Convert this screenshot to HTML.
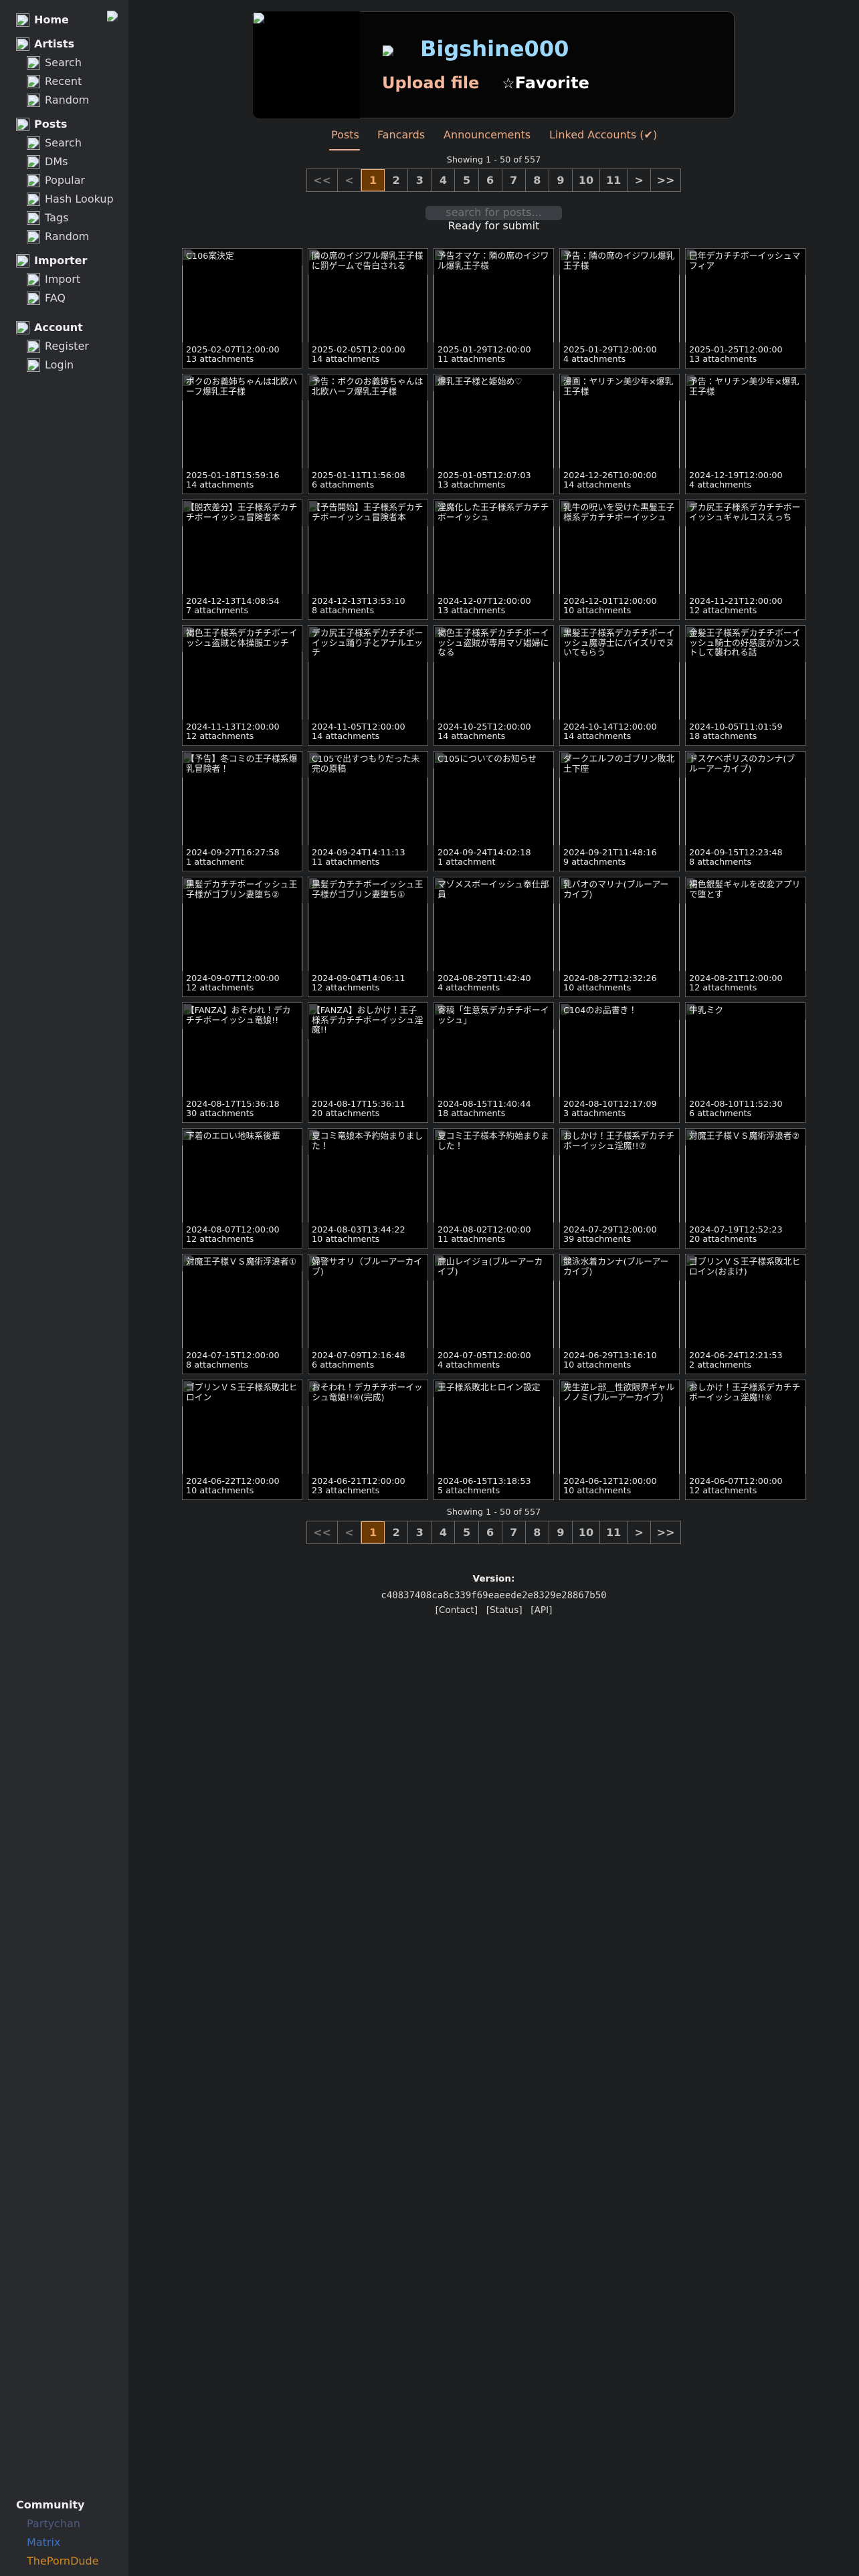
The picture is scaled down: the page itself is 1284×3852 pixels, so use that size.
<!DOCTYPE html>
<html lang="ja">
<head>
<meta charset="utf-8">
<title>Bigshine000</title>
<style>
html,body{margin:0;padding:0;background:#1d1f21;}
body{position:relative;width:1284px;height:3852px;overflow:hidden;font-family:"DejaVu Sans","Noto Sans CJK JP",sans-serif;color:#eee;}
.abs{position:absolute;white-space:nowrap;}
#side{position:absolute;left:0;top:0;width:192px;height:3852px;background:#282a2e;}
.nav{position:absolute;white-space:nowrap;font-size:16px;line-height:20px;color:#d8d8d8;margin-top:1px;}
.nav.h{font-weight:bold;color:#eee;}
.bx{position:absolute;width:18px;height:18px;border:1px solid #a8a8a8;}
.bx svg{position:absolute;left:1px;top:1px;width:16px;height:16px;}
svg.i{position:absolute;width:16px;height:16px;}
#banner{position:absolute;left:378px;top:17px;width:720px;height:160px;box-sizing:border-box;background:#050505;border:1px solid #3c3c3c;border-left:0;border-radius:10px;}
#avatar{position:absolute;left:378px;top:17px;width:160px;height:160px;background:#000;border-radius:10px 0 0 10px;}
.tab{position:absolute;top:192px;font-size:16px;line-height:20px;color:#e8a987;white-space:nowrap;}
.ctr{position:absolute;left:192px;width:1092px;text-align:center;white-space:nowrap;}
.pg{position:absolute;left:458px;height:35px;display:flex;box-sizing:border-box;border:1px solid #6a6a6a;width:560px;font-weight:bold;font-size:16px;line-height:33px;color:#bdbdbd;}
.pg span{display:block;box-sizing:border-box;width:35.1px;text-align:center;border-right:1px solid #6a6a6a;}
.pg span:last-child{border-right:0;flex:1;}
.pg .w{width:46px;}
.pg .m{width:41.1px;}
.pg .d{color:#757575;}
.pg .a{background:#6b3a05;color:#f0a763;outline:1px solid #f0b27a;outline-offset:-1px;border-right:0;}
#grid{position:absolute;left:272px;top:371px;display:grid;grid-template-columns:repeat(5,180px);grid-auto-rows:180px;gap:8px;}
.c{position:relative;box-sizing:border-box;background:#000;border:1px solid #b0b0b0;border-top-color:#5a5a5a;border-bottom-color:#5a5a5a;font-size:12.8px;line-height:14.08px;color:#e8e8e8;}
.c svg{position:absolute;left:1px;top:1px;width:16px;height:16px;opacity:.3;}
.t{position:relative;margin:0 -1px;padding:5px;line-height:14.72px;border:solid #5a5a5a;border-width:0 1px;background:transparent;overflow-wrap:anywhere;word-break:break-all;}
.f{position:absolute;left:-1px;right:-1px;bottom:0;height:38px;box-sizing:border-box;padding:5px;border:solid #5a5a5a;border-width:0 1px;}
</style>
</head>
<body>
<svg width="0" height="0" style="position:absolute">
<defs>
<symbol id="b" viewBox="0 0 16 16">
<path d="M0.5 0.5H11L15.5 5V9L8.5 15.5H0.5Z" fill="#dfe9f7" stroke="#b4b8bc" stroke-width="1"/>
<path d="M11 0.5V5H15.5Z" fill="#fff" stroke="#b4b8bc" stroke-width=".8"/>
<path d="M3 6C3 4.6 5 4.4 5.6 5.2C6.6 4.6 8 5 8 6Z" fill="#fff"/>
<path d="M1 15V11.5C3.5 8.5 7 8 10 10.8L5 15Z" fill="#57a84a"/>
<path d="M9 16L16 9.5V16H14L15 13L11 16Z" fill="#39424a"/>
</symbol>
</defs>
</svg>

<div id="side">
<svg class="i" style="left:160px;top:16px"><use href="#b"/></svg>
<div class="bx" style="left:24px;top:20px"><svg><use href="#b"/></svg></div><div class="nav h" style="left:51px;top:19px">Home</div>
<div class="bx" style="left:24px;top:56px"><svg><use href="#b"/></svg></div><div class="nav h" style="left:51px;top:55px">Artists</div>
<div class="bx" style="left:40px;top:84px"><svg><use href="#b"/></svg></div><div class="nav" style="left:67px;top:83px">Search</div>
<div class="bx" style="left:40px;top:112px"><svg><use href="#b"/></svg></div><div class="nav" style="left:67px;top:111px">Recent</div>
<div class="bx" style="left:40px;top:140px"><svg><use href="#b"/></svg></div><div class="nav" style="left:67px;top:139px">Random</div>
<div class="bx" style="left:24px;top:176px"><svg><use href="#b"/></svg></div><div class="nav h" style="left:51px;top:175px">Posts</div>
<div class="bx" style="left:40px;top:204px"><svg><use href="#b"/></svg></div><div class="nav" style="left:67px;top:203px">Search</div>
<div class="bx" style="left:40px;top:232px"><svg><use href="#b"/></svg></div><div class="nav" style="left:67px;top:231px">DMs</div>
<div class="bx" style="left:40px;top:260px"><svg><use href="#b"/></svg></div><div class="nav" style="left:67px;top:259px">Popular</div>
<div class="bx" style="left:40px;top:288px"><svg><use href="#b"/></svg></div><div class="nav" style="left:67px;top:287px">Hash Lookup</div>
<div class="bx" style="left:40px;top:316px"><svg><use href="#b"/></svg></div><div class="nav" style="left:67px;top:315px">Tags</div>
<div class="bx" style="left:40px;top:344px"><svg><use href="#b"/></svg></div><div class="nav" style="left:67px;top:343px">Random</div>
<div class="bx" style="left:24px;top:380px"><svg><use href="#b"/></svg></div><div class="nav h" style="left:51px;top:379px">Importer</div>
<div class="bx" style="left:40px;top:408px"><svg><use href="#b"/></svg></div><div class="nav" style="left:67px;top:407px">Import</div>
<div class="bx" style="left:40px;top:436px"><svg><use href="#b"/></svg></div><div class="nav" style="left:67px;top:435px">FAQ</div>
<div class="bx" style="left:24px;top:480px"><svg><use href="#b"/></svg></div><div class="nav h" style="left:51px;top:479px">Account</div>
<div class="bx" style="left:40px;top:508px"><svg><use href="#b"/></svg></div><div class="nav" style="left:67px;top:507px">Register</div>
<div class="bx" style="left:40px;top:536px"><svg><use href="#b"/></svg></div><div class="nav" style="left:67px;top:535px">Login</div>
<div class="nav h" style="left:24px;top:3735px">Community</div>
<div class="nav" style="left:40px;top:3763px;color:#505a80">Partychan</div>
<div class="nav" style="left:40px;top:3791px;color:#3b70c4">Matrix</div>
<div class="nav" style="left:40px;top:3819px;color:#d2871f">ThePornDude</div>
</div>

<div id="banner"></div>
<div id="avatar"></div>
<svg class="i" style="left:379px;top:19px"><use href="#b"/></svg>
<svg class="i" style="left:572px;top:68px"><use href="#b"/></svg>
<div class="abs" style="left:628px;top:54px;font-size:32px;line-height:38px;font-weight:bold;color:#9bd8fb">Bigshine000</div>
<div class="abs" style="left:571px;top:110px;font-size:24px;line-height:28px;font-weight:bold;color:#f4b99c">Upload file</div>
<div class="abs" style="left:750px;top:110px;font-size:24px;line-height:28px;font-weight:bold;color:#fff"><span style="font-weight:normal;font-size:22px">☆</span>Favorite</div>

<div class="tab" style="left:495px">Posts</div>
<div class="tab" style="left:564px">Fancards</div>
<div class="tab" style="left:663px">Announcements</div>
<div class="tab" style="left:821px">Linked Accounts (✔)</div>
<div style="position:absolute;left:492px;top:223px;width:46px;height:2px;background:#eeb699"></div>

<div class="ctr" style="top:232px;font-size:12.8px;line-height:15px;color:#ddd">Showing 1 - 50 of 557</div>
<div class="pg" style="top:252px"><span class="w d">&lt;&lt;</span><span class="d">&lt;</span><span class="a">1</span><span>2</span><span>3</span><span>4</span><span>5</span><span>6</span><span>7</span><span>8</span><span>9</span><span class="m">10</span><span class="m">11</span><span>&gt;</span><span>&gt;&gt;</span></div>

<div style="position:absolute;left:636px;top:308px;width:204px;height:21px;background:#3a3d42;border-radius:5px;text-align:center;font-size:16px;line-height:19px;color:#757575">search for posts...</div>
<div class="ctr" style="top:328px;font-size:16px;line-height:19px;color:#eee">Ready for submit</div>

<div id="grid">
<div class="c"><svg><use href="#b"/></svg><div class="t">C106案決定</div><div class="f">2025-02-07T12:00:00<br>13 attachments</div></div>
<div class="c"><svg><use href="#b"/></svg><div class="t">隣の席のイジワル爆乳王子様に罰ゲームで告白される</div><div class="f">2025-02-05T12:00:00<br>14 attachments</div></div>
<div class="c"><svg><use href="#b"/></svg><div class="t">予告オマケ：隣の席のイジワル爆乳王子様</div><div class="f">2025-01-29T12:00:00<br>11 attachments</div></div>
<div class="c"><svg><use href="#b"/></svg><div class="t">予告：隣の席のイジワル爆乳王子様</div><div class="f">2025-01-29T12:00:00<br>4 attachments</div></div>
<div class="c"><svg><use href="#b"/></svg><div class="t">巳年デカチチボーイッシュマフィア</div><div class="f">2025-01-25T12:00:00<br>13 attachments</div></div>

<div class="c"><svg><use href="#b"/></svg><div class="t">ボクのお義姉ちゃんは北欧ハーフ爆乳王子様</div><div class="f">2025-01-18T15:59:16<br>14 attachments</div></div>
<div class="c"><svg><use href="#b"/></svg><div class="t">予告：ボクのお義姉ちゃんは北欧ハーフ爆乳王子様</div><div class="f">2025-01-11T11:56:08<br>6 attachments</div></div>
<div class="c"><svg><use href="#b"/></svg><div class="t">爆乳王子様と姫始め♡</div><div class="f">2025-01-05T12:07:03<br>13 attachments</div></div>
<div class="c"><svg><use href="#b"/></svg><div class="t">漫画：ヤリチン美少年×爆乳王子様</div><div class="f">2024-12-26T10:00:00<br>14 attachments</div></div>
<div class="c"><svg><use href="#b"/></svg><div class="t">予告：ヤリチン美少年×爆乳王子様</div><div class="f">2024-12-19T12:00:00<br>4 attachments</div></div>

<div class="c"><svg><use href="#b"/></svg><div class="t">【脱衣差分】王子様系デカチチボーイッシュ冒険者本</div><div class="f">2024-12-13T14:08:54<br>7 attachments</div></div>
<div class="c"><svg><use href="#b"/></svg><div class="t">【予告開始】王子様系デカチチボーイッシュ冒険者本</div><div class="f">2024-12-13T13:53:10<br>8 attachments</div></div>
<div class="c"><svg><use href="#b"/></svg><div class="t">淫魔化した王子様系デカチチボーイッシュ</div><div class="f">2024-12-07T12:00:00<br>13 attachments</div></div>
<div class="c"><svg><use href="#b"/></svg><div class="t">乳牛の呪いを受けた黒髪王子様系デカチチボーイッシュ</div><div class="f">2024-12-01T12:00:00<br>10 attachments</div></div>
<div class="c"><svg><use href="#b"/></svg><div class="t">デカ尻王子様系デカチチボーイッシュギャルコスえっち</div><div class="f">2024-11-21T12:00:00<br>12 attachments</div></div>

<div class="c"><svg><use href="#b"/></svg><div class="t">褐色王子様系デカチチボーイッシュ盗賊と体操服エッチ</div><div class="f">2024-11-13T12:00:00<br>12 attachments</div></div>
<div class="c"><svg><use href="#b"/></svg><div class="t">デカ尻王子様系デカチチボーイッシュ踊り子とアナルエッチ</div><div class="f">2024-11-05T12:00:00<br>14 attachments</div></div>
<div class="c"><svg><use href="#b"/></svg><div class="t">褐色王子様系デカチチボーイッシュ盗賊が専用マゾ娼婦になる</div><div class="f">2024-10-25T12:00:00<br>14 attachments</div></div>
<div class="c"><svg><use href="#b"/></svg><div class="t">黒髪王子様系デカチチボーイッシュ魔導士にパイズリでヌいてもらう</div><div class="f">2024-10-14T12:00:00<br>14 attachments</div></div>
<div class="c"><svg><use href="#b"/></svg><div class="t">金髪王子様系デカチチボーイッシュ騎士の好感度がカンストして襲われる話</div><div class="f">2024-10-05T11:01:59<br>18 attachments</div></div>

<div class="c"><svg><use href="#b"/></svg><div class="t">【予告】冬コミの王子様系爆乳冒険者！</div><div class="f">2024-09-27T16:27:58<br>1 attachment</div></div>
<div class="c"><svg><use href="#b"/></svg><div class="t">C105で出すつもりだった未完の原稿</div><div class="f">2024-09-24T14:11:13<br>11 attachments</div></div>
<div class="c"><svg><use href="#b"/></svg><div class="t">C105についてのお知らせ</div><div class="f">2024-09-24T14:02:18<br>1 attachment</div></div>
<div class="c"><svg><use href="#b"/></svg><div class="t">ダークエルフのゴブリン敗北土下座</div><div class="f">2024-09-21T11:48:16<br>9 attachments</div></div>
<div class="c"><svg><use href="#b"/></svg><div class="t">ドスケベポリスのカンナ(ブルーアーカイブ)</div><div class="f">2024-09-15T12:23:48<br>8 attachments</div></div>

<div class="c"><svg><use href="#b"/></svg><div class="t">黒髪デカチチボーイッシュ王子様がゴブリン妻堕ち②</div><div class="f">2024-09-07T12:00:00<br>12 attachments</div></div>
<div class="c"><svg><use href="#b"/></svg><div class="t">黒髪デカチチボーイッシュ王子様がゴブリン妻堕ち①</div><div class="f">2024-09-04T14:06:11<br>12 attachments</div></div>
<div class="c"><svg><use href="#b"/></svg><div class="t">マゾメスボーイッシュ奉仕部員</div><div class="f">2024-08-29T11:42:40<br>4 attachments</div></div>
<div class="c"><svg><use href="#b"/></svg><div class="t">乳パオのマリナ(ブルーアーカイブ)</div><div class="f">2024-08-27T12:32:26<br>10 attachments</div></div>
<div class="c"><svg><use href="#b"/></svg><div class="t">褐色銀髪ギャルを改変アプリで堕とす</div><div class="f">2024-08-21T12:00:00<br>12 attachments</div></div>

<div class="c"><svg><use href="#b"/></svg><div class="t">【FANZA】おそわれ！デカチチボーイッシュ竜娘!!</div><div class="f">2024-08-17T15:36:18<br>30 attachments</div></div>
<div class="c"><svg><use href="#b"/></svg><div class="t">【FANZA】おしかけ！王子様系デカチチボーイッシュ淫魔!!</div><div class="f">2024-08-17T15:36:11<br>20 attachments</div></div>
<div class="c"><svg><use href="#b"/></svg><div class="t">寄稿「生意気デカチチボーイッシュ」</div><div class="f">2024-08-15T11:40:44<br>18 attachments</div></div>
<div class="c"><svg><use href="#b"/></svg><div class="t">C104のお品書き！</div><div class="f">2024-08-10T12:17:09<br>3 attachments</div></div>
<div class="c"><svg><use href="#b"/></svg><div class="t">牛乳ミク</div><div class="f">2024-08-10T11:52:30<br>6 attachments</div></div>

<div class="c"><svg><use href="#b"/></svg><div class="t">下着のエロい地味系後輩</div><div class="f">2024-08-07T12:00:00<br>12 attachments</div></div>
<div class="c"><svg><use href="#b"/></svg><div class="t">夏コミ竜娘本予約始まりました！</div><div class="f">2024-08-03T13:44:22<br>10 attachments</div></div>
<div class="c"><svg><use href="#b"/></svg><div class="t">夏コミ王子様本予約始まりました！</div><div class="f">2024-08-02T12:00:00<br>11 attachments</div></div>
<div class="c"><svg><use href="#b"/></svg><div class="t">おしかけ！王子様系デカチチボーイッシュ淫魔!!⑦</div><div class="f">2024-07-29T12:00:00<br>39 attachments</div></div>
<div class="c"><svg><use href="#b"/></svg><div class="t">対魔王子様ＶＳ魔術浮浪者②</div><div class="f">2024-07-19T12:52:23<br>20 attachments</div></div>

<div class="c"><svg><use href="#b"/></svg><div class="t">対魔王子様ＶＳ魔術浮浪者①</div><div class="f">2024-07-15T12:00:00<br>8 attachments</div></div>
<div class="c"><svg><use href="#b"/></svg><div class="t">婦警サオリ（ブルーアーカイブ)</div><div class="f">2024-07-09T12:16:48<br>6 attachments</div></div>
<div class="c"><svg><use href="#b"/></svg><div class="t">鹿山レイジョ(ブルーアーカイブ)</div><div class="f">2024-07-05T12:00:00<br>4 attachments</div></div>
<div class="c"><svg><use href="#b"/></svg><div class="t">競泳水着カンナ(ブルーアーカイブ)</div><div class="f">2024-06-29T13:16:10<br>10 attachments</div></div>
<div class="c"><svg><use href="#b"/></svg><div class="t">ゴブリンＶＳ王子様系敗北ヒロイン(おまけ)</div><div class="f">2024-06-24T12:21:53<br>2 attachments</div></div>

<div class="c"><svg><use href="#b"/></svg><div class="t">ゴブリンＶＳ王子様系敗北ヒロイン</div><div class="f">2024-06-22T12:00:00<br>10 attachments</div></div>
<div class="c"><svg><use href="#b"/></svg><div class="t">おそわれ！デカチチボーイッシュ竜娘!!④(完成)</div><div class="f">2024-06-21T12:00:00<br>23 attachments</div></div>
<div class="c"><svg><use href="#b"/></svg><div class="t">王子様系敗北ヒロイン設定</div><div class="f">2024-06-15T13:18:53<br>5 attachments</div></div>
<div class="c"><svg><use href="#b"/></svg><div class="t">先生逆レ部＿性欲限界ギャルノノミ(ブルーアーカイブ)</div><div class="f">2024-06-12T12:00:00<br>10 attachments</div></div>
<div class="c"><svg><use href="#b"/></svg><div class="t">おしかけ！王子様系デカチチボーイッシュ淫魔!!⑥</div><div class="f">2024-06-07T12:00:00<br>12 attachments</div></div>
</div>

<div class="ctr" style="top:2254px;font-size:12.8px;line-height:15px;color:#ddd">Showing 1 - 50 of 557</div>
<div class="pg" style="top:2274px"><span class="w d">&lt;&lt;</span><span class="d">&lt;</span><span class="a">1</span><span>2</span><span>3</span><span>4</span><span>5</span><span>6</span><span>7</span><span>8</span><span>9</span><span class="m">10</span><span class="m">11</span><span>&gt;</span><span>&gt;&gt;</span></div>

<div class="ctr" style="top:2353px;font-size:13.6px;line-height:16px;font-weight:bold;color:#eee">Version:</div>
<div class="ctr" style="top:2378px;font-family:'DejaVu Sans Mono',monospace;font-size:14px;line-height:16px;color:#ddd">c40837408ca8c339f69eaeede2e8329e28867b50</div>
<div class="ctr" style="top:2400px;font-size:13.6px;line-height:16px;color:#ddd;white-space:pre;word-spacing:2px">[Contact]  [Status]  [API]</div>
</body>
</html>
